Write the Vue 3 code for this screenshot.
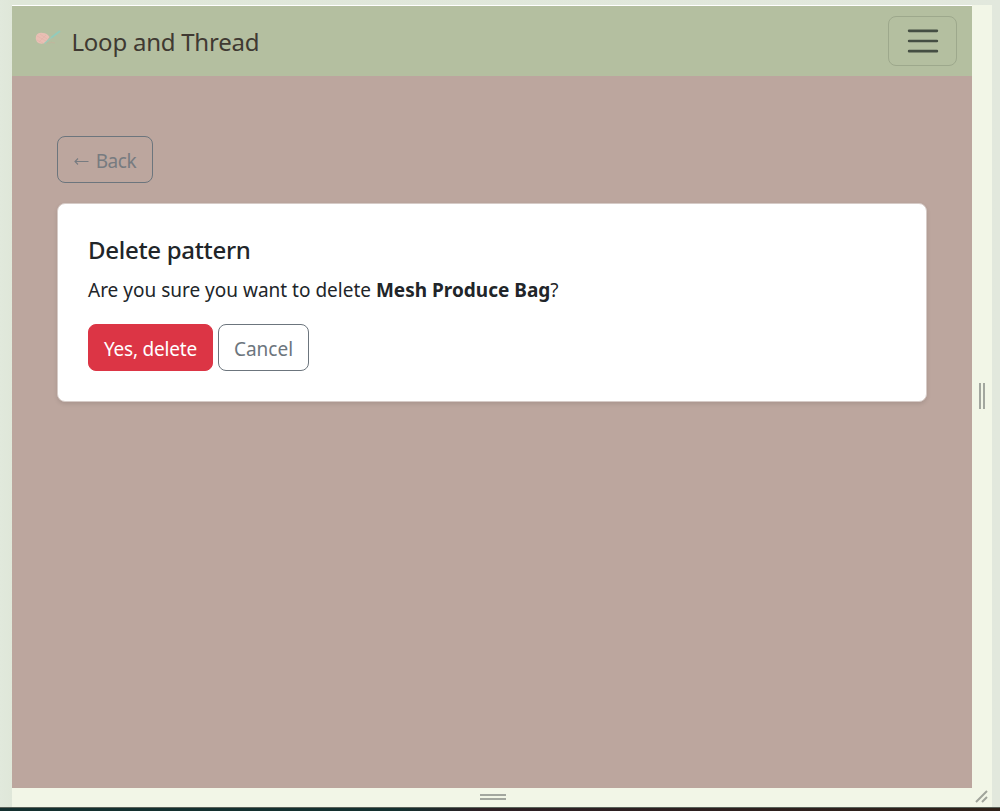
<script setup>
const appName = 'Loop and Thread'
const patternName = 'Mesh Produce Bag'
</script>

<template>
  <div class="workspace">
    <div class="device">
      <main class="screen">
        <header class="navbar">
          <a class="brand">
            <svg class="logo" width="30" height="30" viewBox="0 0 30 30">
              <path d="M4 10Q6 6 11 7Q15 7 17.500 11L13 17Q8 19 5 16Q3 13 4 10Z" fill="#e9bfb4" />
              <path d="M5 10l9 5M8 8l7 5M5 14l6 3M7 16l7-7" fill="none" stroke="#dfb0a7" stroke-width=".5" />
              <path d="M12.500 17.500L20 11" fill="none" stroke="#a0c9b8" stroke-width="1.500" />
              <path d="M19.500 11.500L28 5" fill="none" stroke="#93cbbb" stroke-width="2.200" />
              <path d="M15 17.500Q20 15.500 23 17" fill="none" stroke="#c1b69d" stroke-width="1" />
            </svg>
            <span class="brand-name">{{ appName }}</span>
          </a>
          <button class="toggler" aria-label="Menu">
            <svg width="38" height="38" viewBox="0 0 30 30">
              <path d="M4 7h22M4 15h22M4 23h22" fill="none" stroke="#454e43" stroke-width="2" stroke-linecap="round" stroke-miterlimit="10" />
            </svg>
          </button>
        </header>
        <section class="content">
          <button class="btn back"><svg class="arrow" width="16" height="10" viewBox="0 0 16 10"><path d="M15.500 5.500H2M5 2.500L2 5.500l3 3" fill="none" stroke="currentColor" stroke-width="1.1" /></svg><span>Back</span></button>
          <article class="card">
            <h1><span>Delete pattern</span></h1>
            <p><span class="question">Are you sure you want to delete </span><strong>{{ patternName }}</strong>?</p>
            <div class="actions">
              <button class="btn danger"><span>Yes, delete</span></button>
              <button class="btn cancel"><span>Cancel</span></button>
            </div>
          </article>
        </section>
      </main>
      <div class="handle side"><i class="grip vertical"></i></div>
      <div class="handle bottom"><i class="grip horizontal"></i></div>
      <div class="handle corner">
        <svg width="14" height="14" viewBox="0 0 14 14"><path d="M1 12L12 1M7 12l5-5" fill="none" stroke="#a0a49b" stroke-width="2" /></svg>
      </div>
    </div>
    <footer></footer>
  </div>
</template>

<style>
body { margin: 0; overflow: hidden; }
</style>

<style scoped>
* { box-sizing: border-box; }
.workspace {
  height: 811px;
  display: flex;
  flex-direction: column;
  padding: 5px 0 0 12px;
  background: linear-gradient(90deg, #e1e9dc, #dfe7d9 12px, #e2e8dd);
  font-family: "Noto Sans", "Open Sans", sans-serif;
  color: #212529;
}
.device {
  width: 980px;
  height: 802px;
  flex: none;
  display: grid;
  grid-template: 783px 19px / 960px 20px;
  background: #f2f6e7;
}
.screen { border-top: 1px solid #fff; background: #bca69e; }
.navbar {
  height: 70px;
  padding: 0 15px 0 20px;
  display: flex;
  align-items: center;
  justify-content: space-between;
  background: #b4bfa0;
}
.brand { display: flex; align-items: center; color: #3f3932; }
.logo { margin-right: 9.5px; }
.brand-name { font-size: 24px; letter-spacing: -.24px; line-height: 38px; padding-top: 2px; }
.toggler {
  width: 69px;
  height: 50px;
  padding: 0;
  display: flex;
  align-items: center;
  justify-content: center;
  border: 1px solid #9da88c;
  border-radius: 8px;
  background: none;
}
.content { padding: 60px 45px 0; }
.btn {
  height: 47px;
  padding: 2px 0 0;
  display: flex;
  align-items: center;
  justify-content: center;
  border: 1px solid #6c757d;
  border-radius: 8px;
  background: none;
  font: 19px/30px "Noto Sans", "Open Sans", sans-serif;
  color: #6c757d;
  white-space: nowrap;
}
.back { width: 96px; color: #777b80; letter-spacing: -.4px; padding-right: 1px; }
.arrow { margin-right: 7px; }
.card {
  height: 199px;
  margin-top: 20px;
  padding: 31px 30px 0;
  border: 1px solid #d6cbc7;
  border-radius: 8px;
  background: #fff;
  box-shadow: 0 2px 4px rgba(0, 0, 0, .1);
}
h1 { margin: 0 0 10px; font-size: 24px; font-weight: 500; line-height: 30px; letter-spacing: -.3px; }
p { margin: 0 0 19px; font-size: 19px; line-height: 30px; white-space: pre; }
.actions { display: flex; gap: 5px; }
.danger { width: 125px; border-color: #dc3545; background: #dc3545; color: #fff; letter-spacing: -.2px; }
.cancel { width: 91px; }
.handle { display: flex; align-items: center; justify-content: center; }
.side { padding-bottom: 2px; }
.bottom { padding: 0 0 2px 2px; }
.corner { padding-bottom: 2px; }
.grip { display: block; border: 2px solid #a3a79f; }
.vertical { width: 6px; height: 26px; border-width: 0 2px; }
.horizontal { width: 26px; height: 6px; border-width: 2px 0; }
footer { height: 4px; flex: none; margin-left: -12px; border-top: 1px solid #5a6259; background: linear-gradient(90deg, #14302f 0, #14302f 40%, #2c1f24 48%, #2e2119 100%); }
</style>
